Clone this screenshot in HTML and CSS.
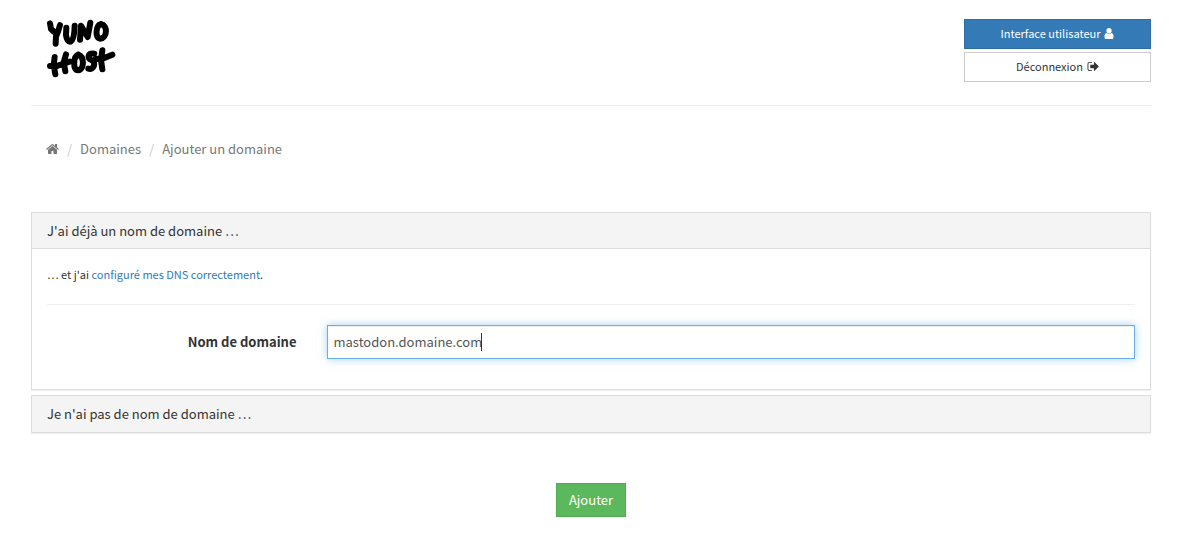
FILE: index.html
```html
<!DOCTYPE html>
<html lang="fr">
<head>
<meta charset="utf-8">
<meta name="viewport" content="width=device-width, initial-scale=1">
<title>YunoHost – Ajouter un domaine</title>
<link rel="stylesheet" href="styles.css">
</head>
<body>
<header class="header">
  <a class="logo" href="#" aria-label="YunoHost">
    <svg viewBox="22 22 210 180" width="70" height="60" aria-hidden="true">
      <g class="logo-ink">
        <path d="M31 35 34 52 47 64M61 40 55 60 49 75 48 96"/>
        <path d="M80 48 79 70Q82 92 93 90Q104 84 105 42"/>
        <path d="M121 84 124 42 144 76 152 33"/>
        <path d="M184 37C168 41 165 80 182 81C202 80 206 42 184 37"/>
        <path d="M45 136 42 160 47 188M79 128 72 152 77 179M31 163 48 164 90 150"/>
        <path d="M116 129C100 135 99 176 115 176C134 174 135 136 116 129"/>
        <path d="M164 126C144 123 141 140 155 145C171 152 163 176 146 171"/>
        <path d="M188 116 184 145 188 173M168 142 192 140 218 129"/>
      </g>
    </svg>
  </a>
  <nav class="header-actions">
    <a class="btn btn-small btn-primary" href="#">Interface utilisateur
      <svg class="icon" viewBox="192 128 1408 1536" width="10" height="11" aria-hidden="true"><path d="M1536 1399q0 109-62.500 187t-150.500 78h-854q-88 0-150.500-78t-62.500-187q0-85 8.500-160.500t31.500-152 58.500-131 94-89 134.500-34.500q131 128 313 128t313-128q76 0 134.500 34.500t94 89 58.500 131 31.500 152 8.500 160.500zm-256-887q0 159-112.500 271.500t-271.500 112.500-271.500-112.500-112.500-271.500 112.500-271.500 271.500-112.500 271.500 112.500 112.500 271.500z"/></svg></a>
    <a class="btn btn-small btn-default" href="#">Déconnexion
      <svg class="icon" viewBox="0 128 1664 1536" width="12" height="11" aria-hidden="true"><path d="M704 1440q0 4 1 20t.5 26.500-3 23.500-10 19.500-20.500 6.500h-320q-119 0-203.500-84.500t-84.500-203.500v-704q0-119 84.500-203.500t203.500-84.500h320q13 0 22.500 9.500t9.500 22.500q0 4 1 20t.5 26.500-3 23.500-10 19.500-20.500 6.500h-320q-66 0-113 47t-47 113v704q0 66 47 113t113 47h312l11.500 1 11.500 3 8 5.500 7 9 2 13.500zm928-544q0 26-19 45l-544 544q-19 19-45 19t-45-19-19-45v-288h-448q-26 0-45-19t-19-45v-384q0-26 19-45t45-19h448v-288q0-26 19-45t45-19 45 19l544 544q19 19 19 45z"/></svg></a>
  </nav>
</header>
<main>
  <nav aria-label="Fil d'Ariane">
    <ol class="breadcrumb">
      <li><a href="#" aria-label="Accueil"><svg class="icon" viewBox="0 128 1664 1536" width="13" height="12" aria-hidden="true"><path d="M1408 992v480q0 26-19 45t-45 19h-384v-384h-256v384h-384q-26 0-45-19t-19-45v-480q0-1 .5-3t.5-3l575-474 575 474q1 2 1 6zm223-69l-62 74q-8 9-21 11h-3q-13 0-21-7l-692-577-692 577q-12 8-24 7-13-2-21-11l-62-74q-8-10-7-23.500t11-21.500l719-599q32-26 76-26t76 26l244 204v-195q0-14 9-23t23-9h192q14 0 23 9t9 23v408l219 182q10 8 11 21.500t-7 23.500z"/></svg></a></li>
      <li><a href="#">Domaines</a></li>
      <li><a href="#" aria-current="page">Ajouter un domaine</a></li>
    </ol>
  </nav>
  <form class="domain-form">
    <section class="panel">
      <h2 class="panel-title"><a href="#">J'ai déjà un nom de domaine …</a></h2>
      <div class="panel-body">
        <p class="hint">… et j'ai <a href="#">configuré mes DNS correctement</a>.</p>
        <div class="form-row">
          <label class="form-label" for="domain">Nom de domaine</label>
          <div class="form-field">
            <input class="form-input" id="domain" type="text" value="mastodon.domaine.com">
            <span class="caret"></span>
          </div>
        </div>
      </div>
    </section>
    <section class="panel">
      <h2 class="panel-title"><a href="#">Je n'ai pas de nom de domaine …</a></h2>
    </section>
    <div class="form-actions">
      <button class="btn btn-success" type="submit">Ajouter</button>
    </div>
  </form>
</main>
</body>
</html>
```
FILE: styles.css
```css
* {
  box-sizing: border-box;
}

body {
  margin: 0;
  padding: 19px 33px 17px 31px;
  background: #fff;
  color: #333;
  font: 13px/20px "Source Sans Pro", "Noto Sans CJK JP", "Noto Sans", sans-serif;
}

a {
  color: #337ab7;
  text-decoration: none;
}

.header {
  display: flex;
  justify-content: space-between;
  align-items: flex-start;
  padding: 0 0 23px 16px;
  border-bottom: 1px solid #eee;
}

.logo svg {
  display: block;
}

.logo-ink {
  fill: none;
  stroke: #000;
  stroke-width: 18;
  stroke-linecap: round;
  stroke-linejoin: round;
}

.header-actions {
  display: flex;
  flex-direction: column;
  gap: 3px;
  width: 187px;
}

.icon {
  fill: currentColor;
  flex: none;
}

.btn {
  display: inline-flex;
  align-items: center;
  justify-content: center;
  gap: 4px;
  padding: 6px 12px;
  border: 1px solid;
  font: inherit;
  cursor: pointer;
}

.btn-small {
  padding: 4px 10px 6px;
  font-size: 11px;
  line-height: 18px;
}

.btn-primary {
  background: #337ab7;
  border-color: #2e6da4;
  color: #fff;
}

.btn-default {
  background: #fff;
  border-color: #ccc;
  color: #333;
}

.btn-success {
  background: #5cb85c;
  border-color: #4cae4c;
  color: #fff;
}

.breadcrumb {
  display: flex;
  margin: 0;
  padding: 33px 15px 53px;
  list-style: none;
}

.breadcrumb li {
  display: flex;
  align-items: center;
}

.breadcrumb li + li::before {
  content: "/";
  padding: 0 8px;
  color: #ccc;
}

.breadcrumb a {
  display: flex;
  color: #777;
}

.panel {
  border: 1px solid #ddd;
  box-shadow: 0 1px 1px rgba(0, 0, 0, 0.05);
}

.panel + .panel {
  margin-top: 5px;
}

.panel-title {
  margin: 0;
  padding: 8px 15px;
  background: #f4f4f4;
  font-size: 13px;
  font-weight: 400;
}

.panel-title a {
  color: #333;
}

.panel-body {
  margin-top: -1px;
  padding: 15px 15px 30px;
  border-top: 1px solid #ddd;
}

.hint {
  margin: 0 0 20px;
  padding-bottom: 20px;
  border-bottom: 1px solid #eee;
  font-size: 11px;
}

.form-row {
  display: grid;
  grid-template-columns: 1fr 3fr;
  margin: 0 -15px;
}

.form-label {
  padding: 7px 15px;
  text-align: right;
  font-weight: 700;
}

.form-field {
  position: relative;
  padding: 0 15px;
}

.form-input {
  display: block;
  width: 100%;
  height: 34px;
  padding: 5px 6px 7px;
  border: 1px solid #66afe9;
  outline: 0;
  background: #fff;
  box-shadow: inset 0 1px 1px rgba(0, 0, 0, 0.075), 0 0 8px rgba(102, 175, 233, 0.6);
  color: #555;
  font: inherit;
}

.caret {
  position: absolute;
  top: 8px;
  left: 169px;
  width: 1px;
  height: 18px;
  background: #333;
}

.form-actions {
  padding-top: 50px;
  text-align: center;
}
```
